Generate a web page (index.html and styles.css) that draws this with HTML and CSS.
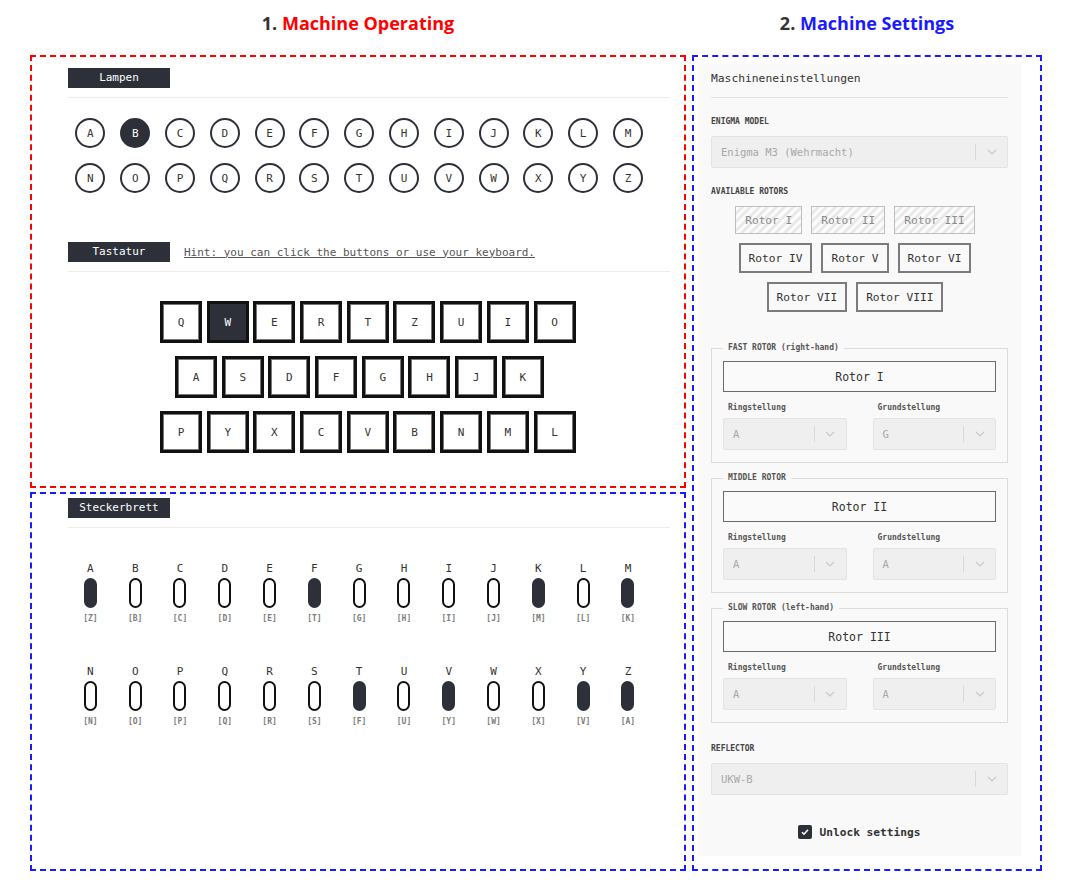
FILE: index.html
```html
<!DOCTYPE html>
<html lang="de">
<head>
<meta charset="utf-8">
<title>Enigma</title>
<link rel="stylesheet" href="styles.css">
</head>
<body>
<div class="page">
  <div class="titles">
    <h2 class="title"><span class="num">1.</span> <span class="red">Machine Operating</span></h2>
    <h2 class="title"><span class="num">2.</span> <span class="blue">Machine Settings</span></h2>
  </div>
  <div class="columns">
    <div class="left">
      <section class="box box-red">
        <div class="sec-head"><span class="tag">Lampen</span></div>
        <div class="lamps">
          <span class="lamp">A</span><span class="lamp lamp-on">B</span><span class="lamp">C</span><span class="lamp">D</span><span class="lamp">E</span><span class="lamp">F</span><span class="lamp">G</span><span class="lamp">H</span><span class="lamp">I</span><span class="lamp">J</span><span class="lamp">K</span><span class="lamp">L</span><span class="lamp">M</span>
          <span class="lamp">N</span><span class="lamp">O</span><span class="lamp">P</span><span class="lamp">Q</span><span class="lamp">R</span><span class="lamp">S</span><span class="lamp">T</span><span class="lamp">U</span><span class="lamp">V</span><span class="lamp">W</span><span class="lamp">X</span><span class="lamp">Y</span><span class="lamp">Z</span>
        </div>
        <div class="sec-head sec-head-kbd"><span class="tag">Tastatur</span><a class="hint" href="#">Hint: you can click the buttons or use your keyboard.</a></div>
        <div class="keyboard">
          <div class="krow krow-wide">
            <span class="key">Q</span><span class="key key-on">W</span><span class="key">E</span><span class="key">R</span><span class="key">T</span><span class="key">Z</span><span class="key">U</span><span class="key">I</span><span class="key">O</span>
          </div>
          <div class="krow krow-mid">
            <span class="key">A</span><span class="key">S</span><span class="key">D</span><span class="key">F</span><span class="key">G</span><span class="key">H</span><span class="key">J</span><span class="key">K</span>
          </div>
          <div class="krow krow-wide">
            <span class="key">P</span><span class="key">Y</span><span class="key">X</span><span class="key">C</span><span class="key">V</span><span class="key">B</span><span class="key">N</span><span class="key">M</span><span class="key">L</span>
          </div>
        </div>
      </section>
      <section class="box box-blue box-plug">
        <div class="sec-head"><span class="tag">Steckerbrett</span></div>
        <div class="plugs">
          <div class="plug"><span class="plug-letter">A</span><span class="socket socket-on"></span><span class="plug-pair">[Z]</span></div>
          <div class="plug"><span class="plug-letter">B</span><span class="socket"></span><span class="plug-pair">[B]</span></div>
          <div class="plug"><span class="plug-letter">C</span><span class="socket"></span><span class="plug-pair">[C]</span></div>
          <div class="plug"><span class="plug-letter">D</span><span class="socket"></span><span class="plug-pair">[D]</span></div>
          <div class="plug"><span class="plug-letter">E</span><span class="socket"></span><span class="plug-pair">[E]</span></div>
          <div class="plug"><span class="plug-letter">F</span><span class="socket socket-on"></span><span class="plug-pair">[T]</span></div>
          <div class="plug"><span class="plug-letter">G</span><span class="socket"></span><span class="plug-pair">[G]</span></div>
          <div class="plug"><span class="plug-letter">H</span><span class="socket"></span><span class="plug-pair">[H]</span></div>
          <div class="plug"><span class="plug-letter">I</span><span class="socket"></span><span class="plug-pair">[I]</span></div>
          <div class="plug"><span class="plug-letter">J</span><span class="socket"></span><span class="plug-pair">[J]</span></div>
          <div class="plug"><span class="plug-letter">K</span><span class="socket socket-on"></span><span class="plug-pair">[M]</span></div>
          <div class="plug"><span class="plug-letter">L</span><span class="socket"></span><span class="plug-pair">[L]</span></div>
          <div class="plug"><span class="plug-letter">M</span><span class="socket socket-on"></span><span class="plug-pair">[K]</span></div>
          <div class="plug"><span class="plug-letter">N</span><span class="socket"></span><span class="plug-pair">[N]</span></div>
          <div class="plug"><span class="plug-letter">O</span><span class="socket"></span><span class="plug-pair">[O]</span></div>
          <div class="plug"><span class="plug-letter">P</span><span class="socket"></span><span class="plug-pair">[P]</span></div>
          <div class="plug"><span class="plug-letter">Q</span><span class="socket"></span><span class="plug-pair">[Q]</span></div>
          <div class="plug"><span class="plug-letter">R</span><span class="socket"></span><span class="plug-pair">[R]</span></div>
          <div class="plug"><span class="plug-letter">S</span><span class="socket"></span><span class="plug-pair">[S]</span></div>
          <div class="plug"><span class="plug-letter">T</span><span class="socket socket-on"></span><span class="plug-pair">[F]</span></div>
          <div class="plug"><span class="plug-letter">U</span><span class="socket"></span><span class="plug-pair">[U]</span></div>
          <div class="plug"><span class="plug-letter">V</span><span class="socket socket-on"></span><span class="plug-pair">[Y]</span></div>
          <div class="plug"><span class="plug-letter">W</span><span class="socket"></span><span class="plug-pair">[W]</span></div>
          <div class="plug"><span class="plug-letter">X</span><span class="socket"></span><span class="plug-pair">[X]</span></div>
          <div class="plug"><span class="plug-letter">Y</span><span class="socket socket-on"></span><span class="plug-pair">[V]</span></div>
          <div class="plug"><span class="plug-letter">Z</span><span class="socket socket-on"></span><span class="plug-pair">[A]</span></div>
        </div>
      </section>
    </div>
    <section class="box box-blue box-settings">
      <div class="panel">
        <div class="panel-title">Maschineneinstellungen</div>
        <div class="field-label">Enigma Model</div>
        <div class="select">
          <span class="select-value">Enigma M3 (Wehrmacht)</span>
          <span class="select-sep"></span>
          <span class="select-arrow"><svg width="10" height="6" viewBox="0 0 10 6"><path d="M1 1l4 4 4-4" fill="none" stroke="#c9c9c9" stroke-width="1.2"/></svg></span>
        </div>
        <div class="field-label">Available Rotors</div>
        <div class="rotor-pool">
          <div class="pool-row">
            <span class="rotor rotor-used">Rotor I</span><span class="rotor rotor-used">Rotor II</span><span class="rotor rotor-used">Rotor III</span>
          </div>
          <div class="pool-row">
            <span class="rotor">Rotor IV</span><span class="rotor">Rotor V</span><span class="rotor">Rotor VI</span>
          </div>
          <div class="pool-row">
            <span class="rotor">Rotor VII</span><span class="rotor">Rotor VIII</span>
          </div>
        </div>

        <fieldset class="slot-set">
          <legend>FAST ROTOR (right-hand)</legend>
          <div class="slot">Rotor I</div>
          <div class="slot-grid">
            <div class="sub-label">Ringstellung</div>
            <div class="sub-label">Grundstellung</div>
            <div class="select select-small"><span class="select-value">A</span><span class="select-sep"></span><span class="select-arrow"><svg width="10" height="6" viewBox="0 0 10 6"><path d="M1 1l4 4 4-4" fill="none" stroke="#c9c9c9" stroke-width="1.2"/></svg></span></div>
            <div class="select select-small"><span class="select-value">G</span><span class="select-sep"></span><span class="select-arrow"><svg width="10" height="6" viewBox="0 0 10 6"><path d="M1 1l4 4 4-4" fill="none" stroke="#c9c9c9" stroke-width="1.2"/></svg></span></div>
          </div>
        </fieldset>

        <fieldset class="slot-set">
          <legend>MIDDLE ROTOR</legend>
          <div class="slot">Rotor II</div>
          <div class="slot-grid">
            <div class="sub-label">Ringstellung</div>
            <div class="sub-label">Grundstellung</div>
            <div class="select select-small"><span class="select-value">A</span><span class="select-sep"></span><span class="select-arrow"><svg width="10" height="6" viewBox="0 0 10 6"><path d="M1 1l4 4 4-4" fill="none" stroke="#c9c9c9" stroke-width="1.2"/></svg></span></div>
            <div class="select select-small"><span class="select-value">A</span><span class="select-sep"></span><span class="select-arrow"><svg width="10" height="6" viewBox="0 0 10 6"><path d="M1 1l4 4 4-4" fill="none" stroke="#c9c9c9" stroke-width="1.2"/></svg></span></div>
          </div>
        </fieldset>

        <fieldset class="slot-set">
          <legend>SLOW ROTOR (left-hand)</legend>
          <div class="slot">Rotor III</div>
          <div class="slot-grid">
            <div class="sub-label">Ringstellung</div>
            <div class="sub-label">Grundstellung</div>
            <div class="select select-small"><span class="select-value">A</span><span class="select-sep"></span><span class="select-arrow"><svg width="10" height="6" viewBox="0 0 10 6"><path d="M1 1l4 4 4-4" fill="none" stroke="#c9c9c9" stroke-width="1.2"/></svg></span></div>
            <div class="select select-small"><span class="select-value">A</span><span class="select-sep"></span><span class="select-arrow"><svg width="10" height="6" viewBox="0 0 10 6"><path d="M1 1l4 4 4-4" fill="none" stroke="#c9c9c9" stroke-width="1.2"/></svg></span></div>
          </div>
        </fieldset>

        <div class="field-label field-label-reflector">Reflector</div>
        <div class="select">
          <span class="select-value">UKW-B</span>
          <span class="select-sep"></span>
          <span class="select-arrow"><svg width="10" height="6" viewBox="0 0 10 6"><path d="M1 1l4 4 4-4" fill="none" stroke="#c9c9c9" stroke-width="1.2"/></svg></span>
        </div>

        <label class="unlock">
          <span class="check"><svg width="10" height="10" viewBox="0 0 10 10"><path d="M2 5.2l2 2 4-4.4" fill="none" stroke="#fff" stroke-width="1.6"/></svg></span>
          <span class="unlock-text">Unlock settings</span>
        </label>
      </div>
    </section>
  </div>
</div>
</body>
</html>
```

FILE: styles.css
```css
* { box-sizing: border-box; }

body {
  margin: 0;
  background: #fff;
  color: #333;
  font-family: "DejaVu Sans Mono", "Liberation Mono", monospace;
}

.page {
  padding-left: 30px;
  width: 1077px;
}

.titles,
.columns {
  display: grid;
  grid-template-columns: 656px 350px;
  column-gap: 6px;
}

.titles { height: 55px; }

.title {
  margin: 0;
  padding-top: 10px;
  text-align: center;
  font-family: "Open Sans", "Noto Sans", sans-serif;
  font-weight: 700;
  font-size: 18px;
  line-height: 26px;
  color: #333;
}

.red { color: #ff0000; }
.blue { color: #1a1aff; }

.left {
  display: flex;
  flex-direction: column;
  gap: 4px;
}

.box { border: 2px dashed; }

.box-red {
  border-color: #ff0000;
  height: 433px;
  padding: 11px 14px 0 36px;
}

.box-blue { border-color: #1a1aff; }

.box-plug {
  height: 379px;
  padding: 4px 14px 0 36px;
}

.box-settings {
  height: 816px;
  padding: 7px 19px 13px 4px;
}

/* section header */
.sec-head {
  display: flex;
  align-items: center;
  padding-bottom: 9px;
  border-bottom: 1px solid #ececec;
}

.tag {
  width: 102px;
  height: 20px;
  background: #2d3039;
  color: #fff;
  font-size: 11px;
  line-height: 20px;
  text-align: center;
}

.hint {
  margin-left: 14px;
  font-size: 11px;
  color: #555;
  text-decoration: underline;
}

.sec-head-kbd { margin-top: 49px; }

/* lamps */
.lamps {
  display: grid;
  grid-template-columns: repeat(13, 44.8px);
  row-gap: 15px;
  margin-top: 20px;
}

.lamp {
  justify-self: center;
  width: 30px;
  height: 30px;
  border: 2px solid #2d3039;
  border-radius: 50%;
  display: flex;
  align-items: center;
  justify-content: center;
  font-size: 11px;
  color: #333;
}

.lamp-on {
  background: #2d3039;
  color: #fff;
}

/* keyboard */
.keyboard {
  display: flex;
  flex-direction: column;
  gap: 13px;
  margin-top: 29px;
}

.krow {
  display: flex;
  gap: 4.7px;
}

.krow-wide { padding-left: 92px; }
.krow-mid { padding-left: 107px; }

.key {
  width: 42px;
  height: 42px;
  border: 3px solid #111;
  box-shadow: inset 0 0 0 1px #777;
  display: flex;
  align-items: center;
  justify-content: center;
  font-size: 11px;
  color: #333;
  background: #fff;
}

.key-on {
  background: #2d3039;
  box-shadow: none;
  color: #fff;
}

/* plugboard */
.plugs {
  display: grid;
  grid-template-columns: repeat(13, 44.8px);
  row-gap: 40px;
  margin-top: 34px;
}

.plug {
  display: flex;
  flex-direction: column;
  align-items: center;
}

.plug-letter {
  font-size: 11px;
  line-height: 14px;
  color: #333;
}

.socket {
  margin-top: 2px;
  width: 13px;
  height: 30px;
  border: 2px solid #111;
  border-radius: 7px;
  background: #fff;
}

.socket-on {
  background: #2d3039;
  border-color: #2d3039;
}

.plug-pair {
  margin-top: 5px;
  font-size: 8px;
  font-weight: 700;
  line-height: 12px;
  color: #7d7d7d;
}

/* settings panel */
.panel {
  height: 100%;
  background: #f9f9f9;
  padding: 0 13px;
}

.panel-title {
  padding: 7px 0 10px;
  font-size: 11.3px;
  line-height: 16px;
  color: #333;
  border-bottom: 1px solid #e4e4e4;
}

.field-label {
  margin-top: 19px;
  font-size: 8px;
  font-weight: 700;
  line-height: 10px;
  text-transform: uppercase;
  color: #444;
}

.field-label-reflector { margin-top: 21px; }

.select {
  display: flex;
  align-items: center;
  height: 32px;
  margin-top: 9px;
  background: #efefef;
  border: 1px solid #e3e3e3;
  border-radius: 2px;
}

.select-small { margin-top: 0; }

.select-value {
  flex: 1;
  padding-left: 9px;
  font-size: 10.5px;
  color: #a8a8a8;
}

.select-sep {
  width: 1px;
  height: 16px;
  background: #d9d9d9;
}

.select-arrow {
  width: 31px;
  display: flex;
  justify-content: center;
  align-items: center;
}

.select-arrow svg { display: block; }

/* rotor pool */
.rotor-pool {
  display: flex;
  flex-direction: column;
  align-items: center;
  gap: 9px;
  margin-top: 9px;
  padding-right: 9px;
}

.pool-row {
  display: flex;
  gap: 9px;
}

.rotor {
  height: 30px;
  padding: 0 8px;
  border: 2px solid #7b7b7b;
  display: flex;
  align-items: center;
  font-size: 11.2px;
  color: #333;
  background: #f9f9f9;
}

.rotor-used {
  height: 28px;
  padding: 0 9px;
  border: 1px solid #bdbdbd;
  color: #8a8a8a;
  background: repeating-linear-gradient(135deg, #fbfbfb 0 3px, #e9e9e9 3px 6px);
}

/* rotor slots */
.slot-set {
  margin: 10px 0 0;
  padding: 8px 11px 12px;
  border: 1px solid #dcdcdc;
  min-width: 0;
}

.rotor-pool + .slot-set { margin-top: 31px; }

.slot-set legend {
  padding: 0 5px;
  font-size: 8px;
  font-weight: 700;
  line-height: 10px;
  color: #555;
}

.slot {
  height: 31px;
  border: 1px solid #6b6b6b;
  display: flex;
  align-items: center;
  justify-content: center;
  font-size: 11.5px;
  color: #333;
  background: #fafafa;
}

.slot-grid {
  display: grid;
  grid-template-columns: 1fr 1fr;
  column-gap: 26px;
  row-gap: 5px;
  margin-top: 11px;
}

.sub-label {
  padding-left: 5px;
  font-size: 8px;
  font-weight: 700;
  line-height: 10px;
  color: #555;
}

/* unlock */
.unlock {
  display: flex;
  align-items: center;
  justify-content: center;
  gap: 7px;
  margin-top: 29px;
  height: 16px;
}

.check {
  width: 14px;
  height: 14px;
  background: #2d3039;
  border-radius: 2px;
  display: flex;
  align-items: center;
  justify-content: center;
}

.check svg { display: block; }

.unlock-text {
  font-size: 11.2px;
  font-weight: 700;
  color: #333;
}
```
